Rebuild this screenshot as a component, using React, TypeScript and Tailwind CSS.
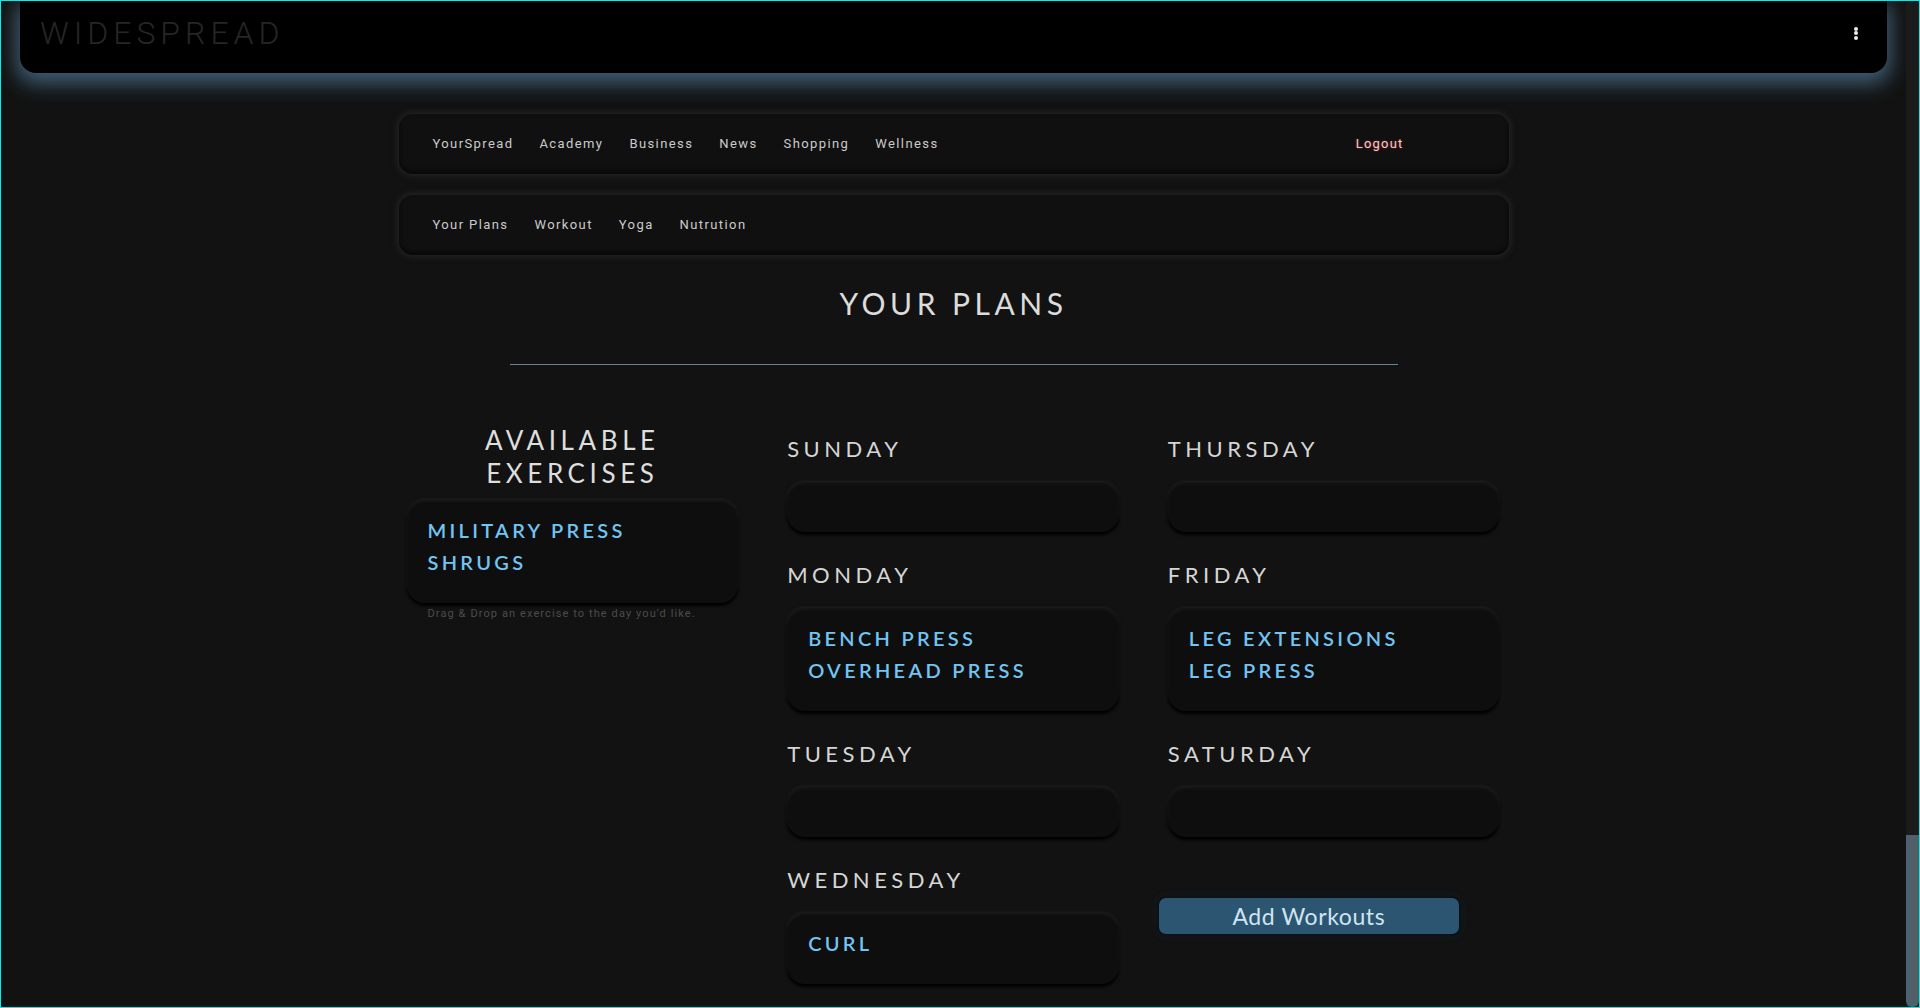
import React from "react"

type Day = { name: string; exercises: string[] }

const leftDays: Day[] = [
  { name: "Sunday", exercises: [] },
  { name: "Monday", exercises: ["Bench Press", "Overhead Press"] },
  { name: "Tuesday", exercises: [] },
  { name: "Wednesday", exercises: ["Curl"] },
]

const rightDays: Day[] = [
  { name: "Thursday", exercises: [] },
  { name: "Friday", exercises: ["Leg Extensions", "Leg Press"] },
  { name: "Saturday", exercises: [] },
]

const mainLinks = ["YourSpread", "Academy", "Business", "News", "Shopping", "Wellness"]
const subLinks = ["Your Plans", "Workout", "Yoga", "Nutrution"]

const heading = "font-['Lato','Noto_Sans',sans-serif]"
const navFont = "font-['Roboto','Liberation_Sans',sans-serif]"

function DropBox({ items }: { items: string[] }) {
  return (
    <div className="min-h-[50px] rounded-[18px] bg-[#0e0e0e] pl-[21px] pr-4 pt-[14px] pb-[25px] shadow-[0_3px_3px_rgba(0,0,0,0.95),0_-1px_3px_rgba(60,60,60,0.35),inset_0_2px_3px_rgba(255,255,255,0.04)]">
      {items.map((item) => (
        <div
          key={item}
          className={`${heading} text-[20px] leading-[32px] font-semibold tracking-[3.3px] uppercase text-[#72c4f3]`}
        >
          {item}
        </div>
      ))}
    </div>
  )
}

function DayBlock({ day }: { day: Day }) {
  return (
    <div className="mb-[30px]">
      <div className={`${heading} text-[22px] leading-[26px] tracking-[4.5px] uppercase text-[#d6d6d6] mb-[20px]`}>
        {day.name}
      </div>
      <DropBox items={day.exercises} />
    </div>
  )
}

function NavBar({ links, right }: { links: string[]; right?: string }) {
  return (
    <div className="h-[60px] rounded-[14px] bg-[#101010] flex items-center pl-[34px] pr-[105px] shadow-[0_0_6px_2px_rgba(38,38,38,0.9),inset_0_-3px_4px_rgba(0,0,0,0.55)]">
      <div className={`${navFont} flex gap-[26px] text-[13px] tracking-[1.4px] text-[#cbcbcb]`}>
        {links.map((l) => (
          <span key={l}>{l}</span>
        ))}
      </div>
      {right && (
        <span
          className={`${navFont} ml-auto text-[13px] tracking-[1.2px] text-[#ebcaca] [text-shadow:0_0_2px_rgba(200,40,40,0.9)]`}
        >
          {right}
        </span>
      )}
    </div>
  )
}

export default function App() {
  return (
    <div className="h-[1008px] border border-[#00f0f0] bg-[#121212] flex overflow-hidden">
      <div className="flex-1 min-w-0">
        {/* top bar */}
        <div className="mx-[19px] h-[72px] rounded-b-[16px] bg-black flex items-center justify-between pl-[20px] pr-[29px] pb-[8px] shadow-[0_7px_20px_4px_rgba(78,118,146,0.75)]">
          <span className={`${navFont} font-light text-[32px] tracking-[5px] text-[#262626]`}>WIDESPREAD</span>
          <div className="flex flex-col gap-[0.5px]">
            <span className="w-[4px] h-[4px] rounded-full bg-[#e6edf2]" />
            <span className="w-[4px] h-[4px] rounded-full bg-[#e6edf2]" />
            <span className="w-[4px] h-[4px] rounded-full bg-[#e6edf2]" />
          </div>
        </div>

        <div className="w-[1110px] mx-auto pt-[41px]">
          <NavBar links={mainLinks} right="Logout" />
          <div className="h-[21px]" />
          <NavBar links={subLinks} />

          <h1
            className={`${heading} mt-[30px] text-center text-[30px] leading-[36px] tracking-[4.5px] text-[#dcdcdc] font-normal`}
          >
            YOUR PLANS
          </h1>
          <hr className="w-[888px] mx-auto mt-[43px] border-0 border-t border-[#66849a]" />

          <div className="grid grid-cols-3 gap-[49px] pl-[8px] pr-[9px] mt-[59px]">
            <div>
              <div
                className={`${heading} text-center text-[26px] leading-[33px] tracking-[4.6px] uppercase text-[#dedede] mb-[10px]`}
              >
                Available
                <br />
                Exercises
              </div>
              <DropBox items={["Military Press", "Shrugs"]} />
              <p
                className={`${navFont} mt-[3px] pl-[21px] text-[11px] leading-[16px] tracking-[1.1px] text-[#4c4c4c]`}
              >
                Drag &amp; Drop an exercise to the day you'd like.
              </p>
            </div>

            <div className="pt-[12px]">
              {leftDays.map((d) => (
                <DayBlock key={d.name} day={d} />
              ))}
            </div>

            <div className="pt-[12px]">
              {rightDays.map((d) => (
                <DayBlock key={d.name} day={d} />
              ))}
              <button
                className={`${heading} -ml-[9px] mt-[31px] w-[300px] h-[36px] rounded-[7px] bg-[#2c5571] text-[23px] tracking-[0.6px] leading-none text-[#cfe4f0] shadow-[0_0_5px_2px_rgba(0,0,0,0.8),0_0_8px_rgba(70,130,170,0.45)]`}
              >
                Add Workouts
              </button>
            </div>
          </div>
        </div>
      </div>

      {/* scrollbar */}
      <div className="w-[13px] bg-[#1b1b1b] flex flex-col justify-end">
        <div className="h-[172px] rounded-b-[6px] bg-gradient-to-r from-[#4a6272] to-[#575c60]" />
      </div>
    </div>
  )
}
